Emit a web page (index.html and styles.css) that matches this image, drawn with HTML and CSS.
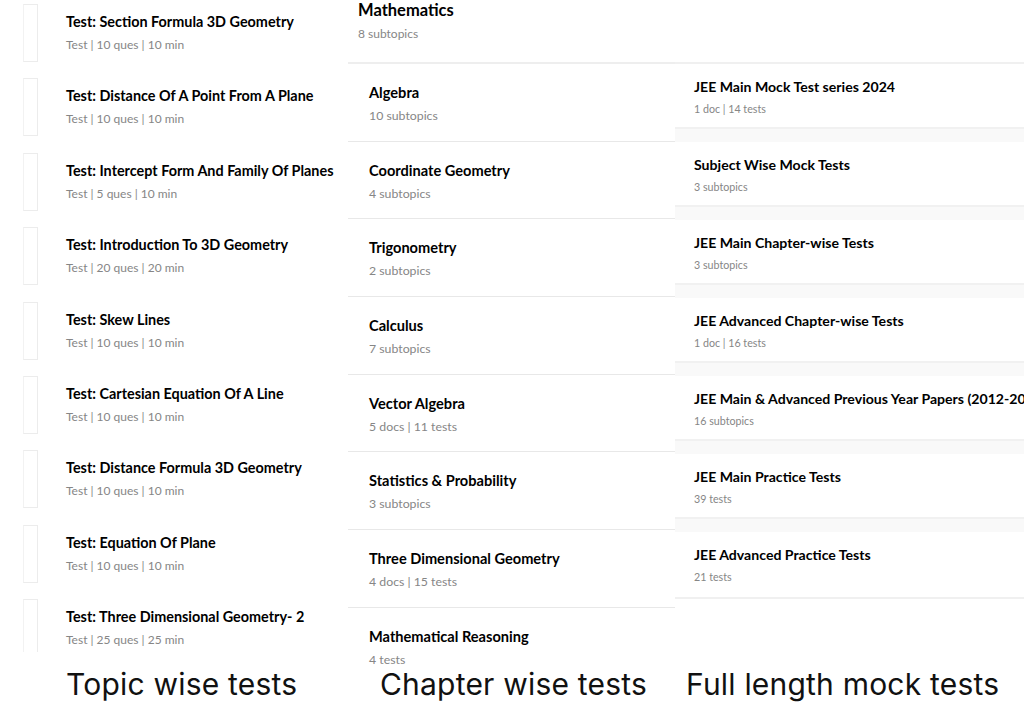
FILE: index.html
```html
<!DOCTYPE html>
<html>
<head>
<meta charset="utf-8">
<link rel="stylesheet" href="styles.css">
</head>
<body>
<div class="page">
  <section class="col col-topic">
    <div class="shot topic-list">
      <div class="trow"><div class="thumb"></div><div class="info"><div class="title">Test: Section Formula 3D Geometry</div><div class="meta">Test | 10 ques | 10 min</div></div></div>
      <div class="trow"><div class="thumb"></div><div class="info"><div class="title">Test: Distance Of A Point From A Plane</div><div class="meta">Test | 10 ques | 10 min</div></div></div>
      <div class="trow"><div class="thumb"></div><div class="info"><div class="title">Test: Intercept Form And Family Of Planes</div><div class="meta">Test | 5 ques | 10 min</div></div></div>
      <div class="trow"><div class="thumb"></div><div class="info"><div class="title">Test: Introduction To 3D Geometry</div><div class="meta">Test | 20 ques | 20 min</div></div></div>
      <div class="trow"><div class="thumb"></div><div class="info"><div class="title">Test: Skew Lines</div><div class="meta">Test | 10 ques | 10 min</div></div></div>
      <div class="trow"><div class="thumb"></div><div class="info"><div class="title">Test: Cartesian Equation Of A Line</div><div class="meta">Test | 10 ques | 10 min</div></div></div>
      <div class="trow"><div class="thumb"></div><div class="info"><div class="title">Test: Distance Formula 3D Geometry</div><div class="meta">Test | 10 ques | 10 min</div></div></div>
      <div class="trow"><div class="thumb"></div><div class="info"><div class="title">Test: Equation Of Plane</div><div class="meta">Test | 10 ques | 10 min</div></div></div>
      <div class="trow"><div class="thumb"></div><div class="info"><div class="title">Test: Three Dimensional Geometry- 2</div><div class="meta">Test | 25 ques | 25 min</div></div></div>
    </div>
    <div class="caption">Topic wise tests</div>
  </section>

  <section class="col col-chapter">
    <div class="shot chapter-list">
      <div class="chead"><div class="htitle">Mathematics</div><div class="meta">8 subtopics</div></div>
      <div class="crow"><div class="title">Algebra</div><div class="meta">10 subtopics</div></div>
      <div class="crow"><div class="title">Coordinate Geometry</div><div class="meta">4 subtopics</div></div>
      <div class="crow"><div class="title">Trigonometry</div><div class="meta">2 subtopics</div></div>
      <div class="crow"><div class="title">Calculus</div><div class="meta">7 subtopics</div></div>
      <div class="crow"><div class="title">Vector Algebra</div><div class="meta">5 docs | 11 tests</div></div>
      <div class="crow"><div class="title">Statistics &amp; Probability</div><div class="meta">3 subtopics</div></div>
      <div class="crow"><div class="title">Three Dimensional Geometry</div><div class="meta">4 docs | 15 tests</div></div>
      <div class="crow last"><div class="title">Mathematical Reasoning</div><div class="meta">4 tests</div></div>
    </div>
    <div class="caption">Chapter wise tests</div>
  </section>

  <section class="col col-mock">
    <div class="shot mock-list">
      <div class="mrow"><div class="title">JEE Main Mock Test series 2024</div><div class="meta small">1 doc | 14 tests</div></div>
      <div class="mrow"><div class="title">Subject Wise Mock Tests</div><div class="meta small">3 subtopics</div></div>
      <div class="mrow"><div class="title">JEE Main Chapter-wise Tests</div><div class="meta small">3 subtopics</div></div>
      <div class="mrow"><div class="title">JEE Advanced Chapter-wise Tests</div><div class="meta small">1 doc | 16 tests</div></div>
      <div class="mrow"><div class="title">JEE Main &amp; Advanced Previous Year Papers (2012-20</div><div class="meta small">16 subtopics</div></div>
      <div class="mrow"><div class="title">JEE Main Practice Tests</div><div class="meta small">39 tests</div></div>
      <div class="mrow last"><div class="title">JEE Advanced Practice Tests</div><div class="meta small">21 tests</div></div>
    </div>
    <div class="caption">Full length mock tests</div>
  </section>
</div>
</body>
</html>
```

FILE: styles.css
```css
* { box-sizing: border-box; }
html, body { margin: 0; padding: 0; background: #fff; }
body { font-family: Lato, "Liberation Sans", sans-serif; color: #111; }

.page {
  display: grid;
  grid-template-columns: 348px 327px 349px;
  width: 1024px;
  height: 724px;
  overflow: hidden;
}
.col { display: flex; flex-direction: column; min-width: 0; }
.shot { height: 652px; overflow: hidden; }

.title { font-weight: 700; font-size: 14.4px; line-height: 20px; color: #000; white-space: nowrap; }
.meta { font-size: 12px; line-height: 18px; color: #868686; margin-top: 4px; white-space: nowrap; }
.meta.small { font-size: 10.7px; line-height: 16px; }

/* topic column */
.trow { display: flex; height: 74.4px; }
.thumb {
  width: 15px;
  height: 58px;
  margin: 4px 0 0 23px;
  border: 1px solid #ececec;
  border-left-color: #f2f2f2;
}
.info { padding: 12px 0 0 28px; }

/* chapter column */
.col-chapter .shot { height: 668px; }
.chead { height: 64px; padding: 0 0 0 10px; border-bottom: 2px solid #eeeeee; }
.htitle { font-weight: 700; font-size: 16.5px; line-height: 20px; color: #000; }
.chead .meta { margin-top: 5px; }
.crow { height: 77.7px; padding: 19px 0 0 21px; border-bottom: 1px solid #e8e8e8; }
.crow .title { font-size: 14.6px; }
.crow .meta { font-size: 12.3px; }
.crow.last { border-bottom: none; }

/* mock column */
.mock-list { padding-top: 62px; }
.mock-list::before { content: ""; display: block; height: 2px; background: #f0f0f0; }
.mrow {
  height: 78px;
  padding: 13px 0 0 19px;
  border-bottom: 13px solid #f9f9f9;
  box-shadow: inset 0 -2px 0 #f1f1f1;
}
.mrow .title { font-size: 14.1px; }
.mrow.last { border-bottom: 2px solid #f0f0f0; height: 67px; box-shadow: none; }

/* captions */
.caption {
  font-family: Inter, "Open Sans", sans-serif;
  font-weight: 400;
  font-size: 30px;
  line-height: 40px;
  margin-top: 12px;
  color: #111;
  white-space: nowrap;
  letter-spacing: 0.2px;
}
.col-chapter .caption { margin-top: -4px; }
.col-topic .caption { padding-left: 66px; }
.col-chapter .caption { padding-left: 32px; }
.col-mock .caption { padding-left: 11px; }
```
